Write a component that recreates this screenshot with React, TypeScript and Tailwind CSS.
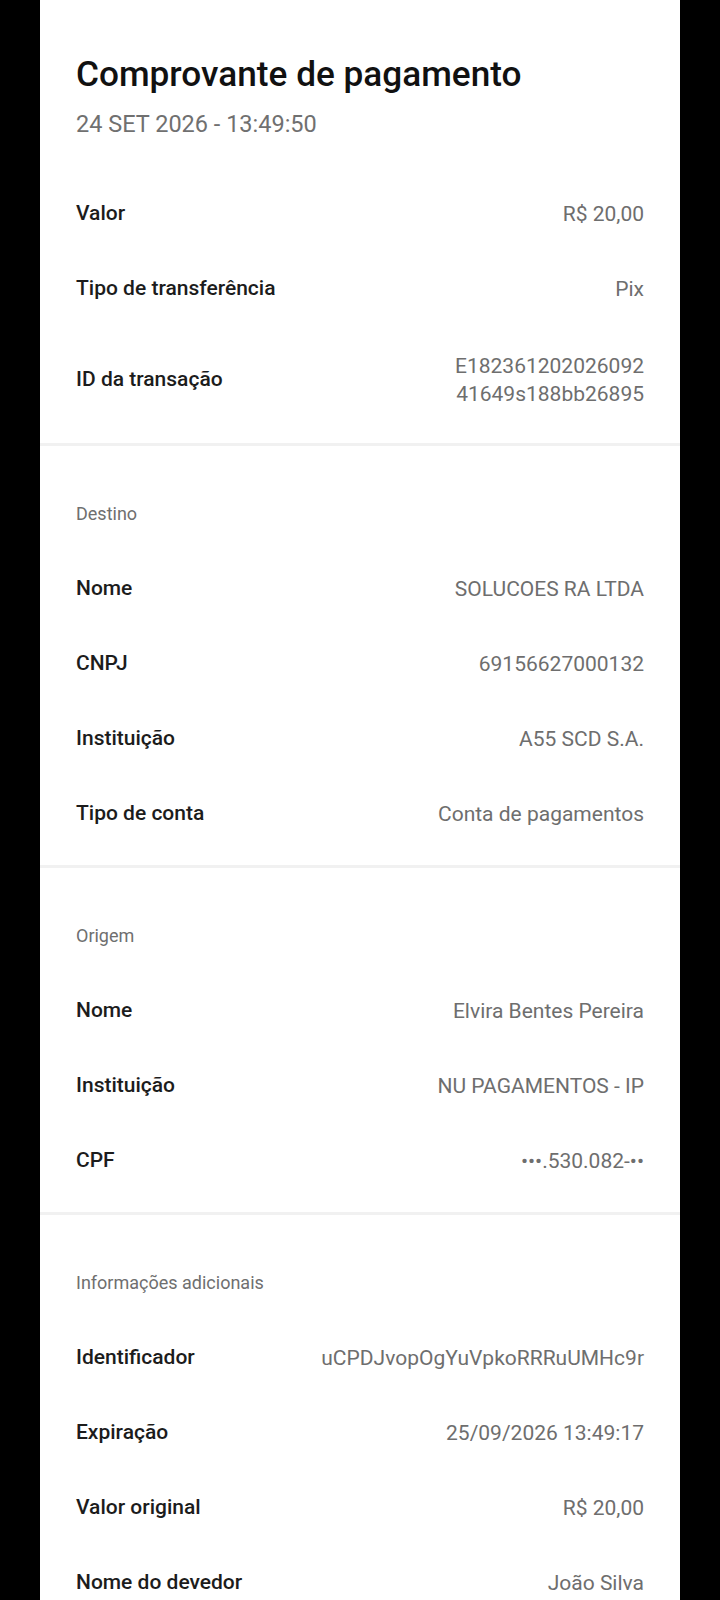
type Row = { label: string; value: string[] };

const topRows: Row[] = [
  { label: "Valor", value: ["R$ 20,00"] },
  { label: "Tipo de transferência", value: ["Pix"] },
  { label: "ID da transação", value: ["E182361202026092", "41649s188bb26895"] },
];

const sections: { title: string; rows: Row[] }[] = [
  {
    title: "Destino",
    rows: [
      { label: "Nome", value: ["SOLUCOES RA LTDA"] },
      { label: "CNPJ", value: ["69156627000132"] },
      { label: "Instituição", value: ["A55 SCD S.A."] },
      { label: "Tipo de conta", value: ["Conta de pagamentos"] },
    ],
  },
  {
    title: "Origem",
    rows: [
      { label: "Nome", value: ["Elvira Bentes Pereira"] },
      { label: "Instituição", value: ["NU PAGAMENTOS - IP"] },
      { label: "CPF", value: ["•••.530.082-••"] },
    ],
  },
  {
    title: "Informações adicionais",
    rows: [
      { label: "Identificador", value: ["uCPDJvopOgYuVpkoRRRuUMHc9r"] },
      { label: "Expiração", value: ["25/09/2026 13:49:17"] },
      { label: "Valor original", value: ["R$ 20,00"] },
      { label: "Nome do devedor", value: ["João Silva"] },
    ],
  },
];

function DetailRow({ row }: { row: Row }) {
  const tall = row.value.length > 1;
  return (
    <div className={`flex items-center justify-between ${tall ? "h-[108px]" : "h-[75px]"}`}>
      <span className="text-[21px] font-medium text-[#1c1c1c]">{row.label}</span>
      <div className="text-right text-[21px] leading-[28px] text-[#6e6e6e] whitespace-pre">
        {row.value.map((v) => (
          <div key={v}>{v}</div>
        ))}
      </div>
    </div>
  );
}

function Divider() {
  return <div className="h-[3px] bg-[#f1f1f1]" />;
}

export default function App() {
  return (
    <div className="min-h-[1600px] bg-black font-['Roboto',sans-serif]">
      <div className="mx-auto w-[640px] min-h-[1600px] bg-white">
        <div className="px-9 pt-[52px] pb-[9px]">
          <h1 className="text-[35.2px] leading-[44px] font-medium text-[#111111]">
            Comprovante de pagamento
          </h1>
          <p className="mt-[13px] text-[23.5px] leading-[30px] text-[#707070]">
            24 SET 2026 - 13:49:50
          </p>
          <div className="mt-[37px]">
            {topRows.map((r) => (
              <DetailRow key={r.label} row={r} />
            ))}
          </div>
        </div>
        {sections.map((s) => (
          <div key={s.title}>
            <Divider />
            <div className="px-9 pt-[30px] pb-[14px]">
              <div className="flex h-[75px] items-center text-[18px] text-[#6f6f6f]">
                {s.title}
              </div>
              {s.rows.map((r) => (
                <DetailRow key={r.label} row={r} />
              ))}
            </div>
          </div>
        ))}
      </div>
    </div>
  );
}
